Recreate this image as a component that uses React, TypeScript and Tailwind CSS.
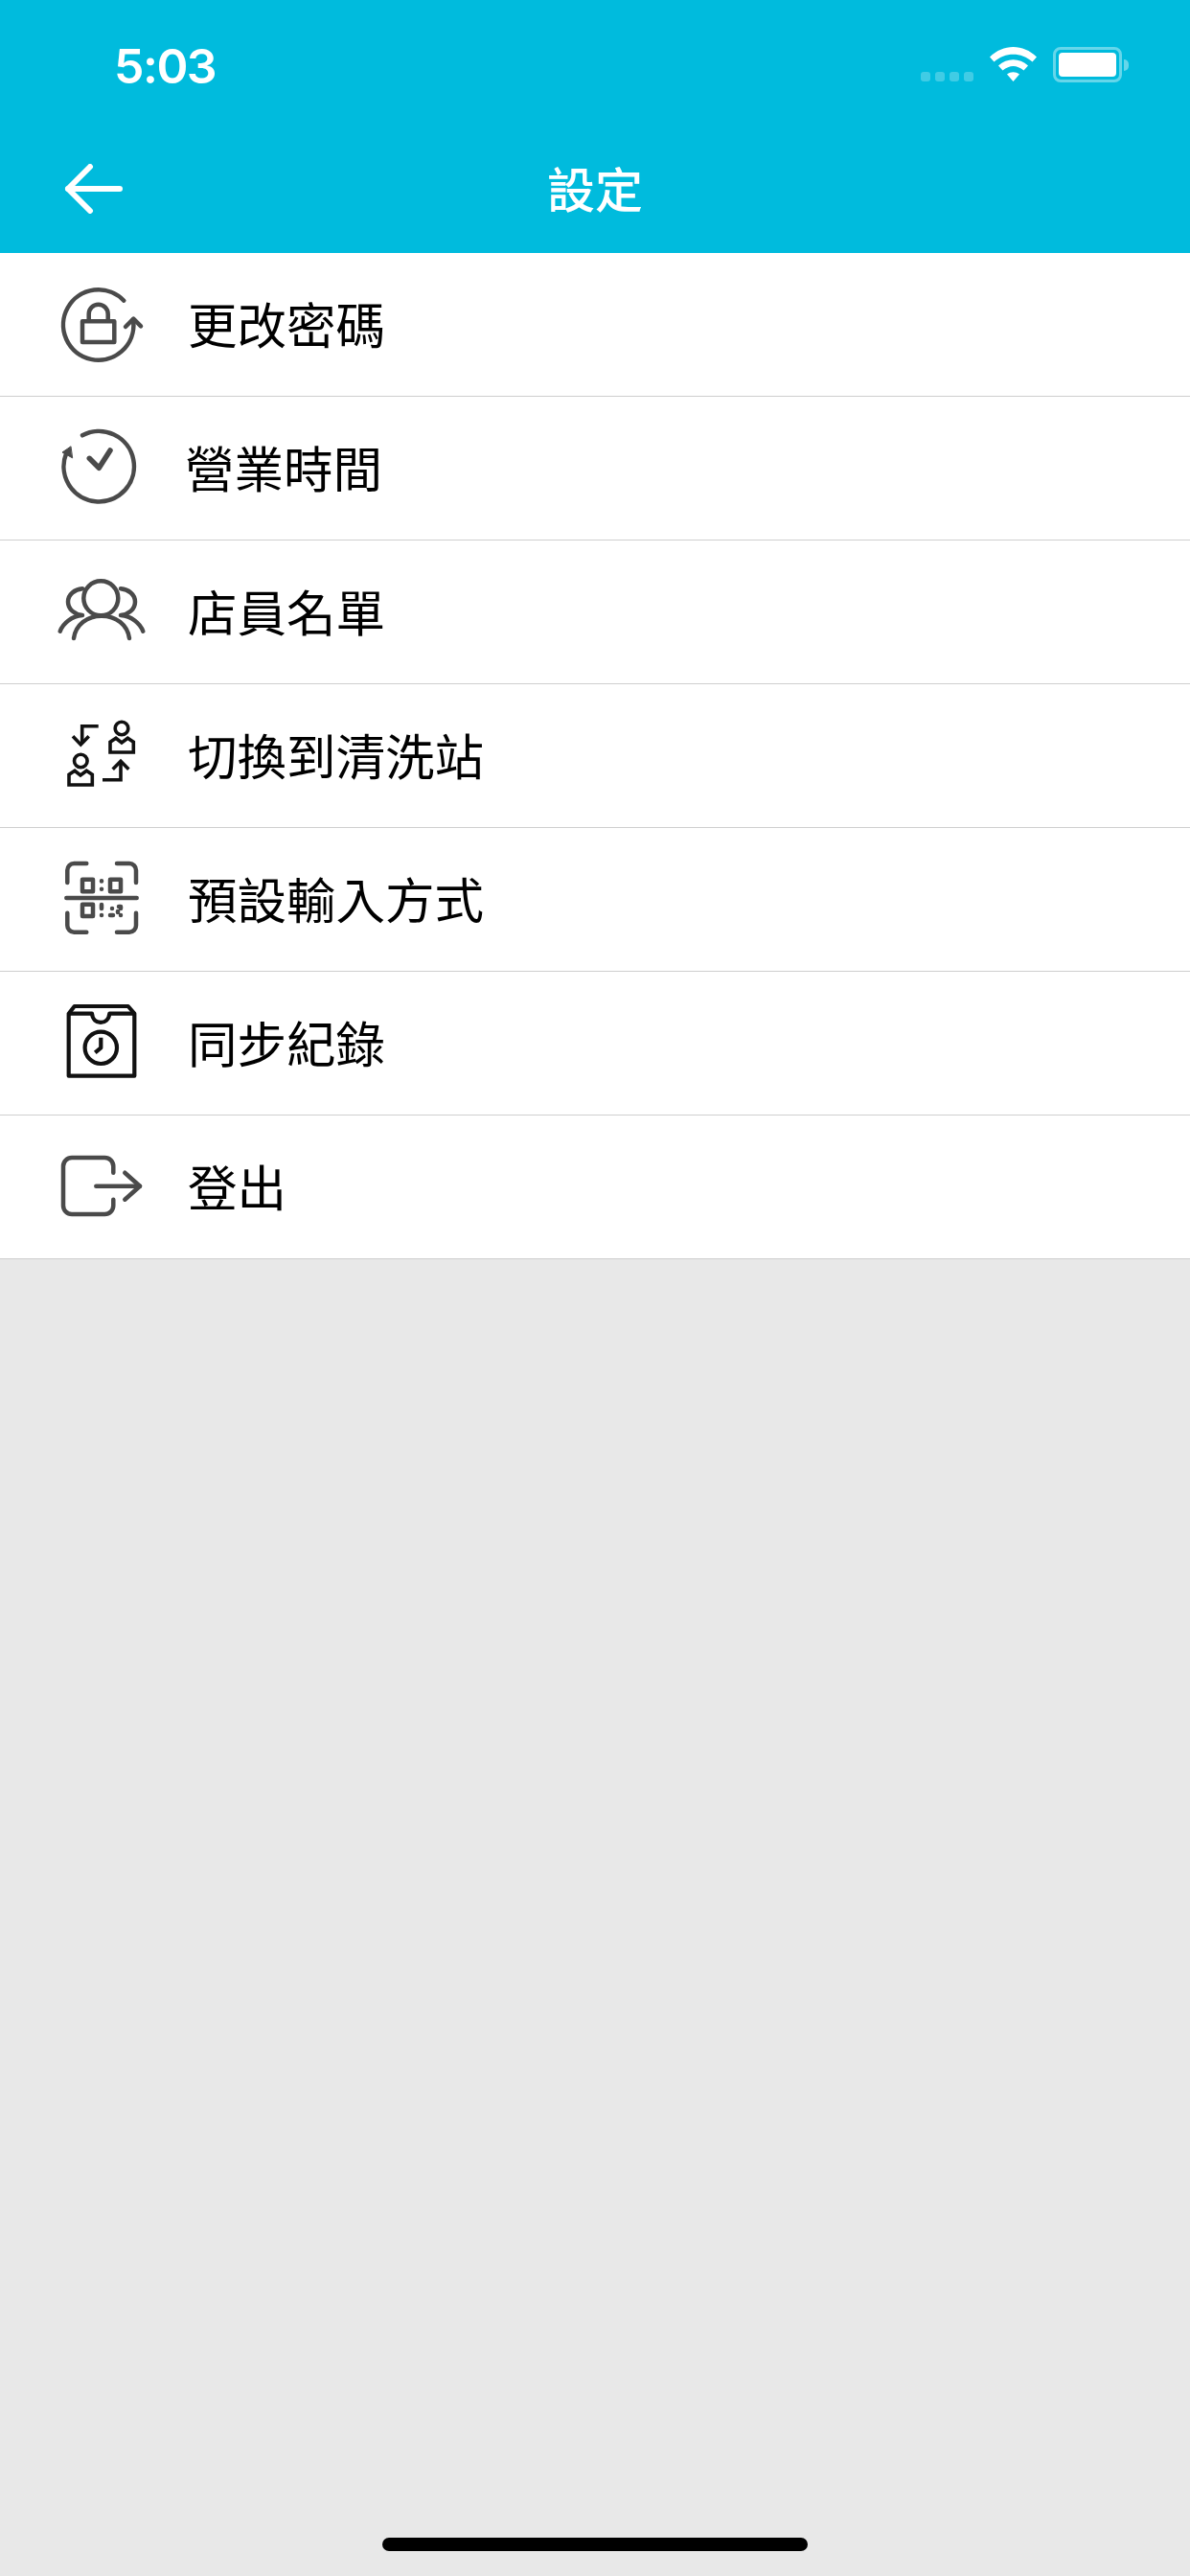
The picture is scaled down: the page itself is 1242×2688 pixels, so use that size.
import React from 'react';

const cjk = { fontFamily: '"Noto Sans CJK TC", "Noto Sans", sans-serif' };

function LockIcon() {
  return (
    <svg className="mt-[2px]" width="100" height="100" viewBox="0 0 100 100" fill="none" stroke="#4a4a4a" strokeWidth="4.5" strokeLinecap="round" strokeLinejoin="round">
      <path d="M72.3 23.7A36.7 36.7 0 1 0 82.3 46" />
      <path d="M74 51L82.3 42.7L90 50.3" />
      <rect x="29" y="45.3" width="33.3" height="21.7" />
      <path d="M35.7 44V37.7a10 10 0 0 1 20 0V44" />
    </svg>
  );
}

function HoursIcon() {
  return (
    <svg className="mt-[2px]" width="100" height="100" viewBox="0 0 100 100" fill="none" stroke="#4a4a4a" strokeWidth="4.5" strokeLinecap="round" strokeLinejoin="round">
      <path d="M29 14.3A36.7 36.7 0 1 1 12.300 32.700" />
      <path d="M16.7 26L8 32L18.3 37.7Z" fill="#4a4a4a" strokeWidth="1" />
      <path d="M36.3 38.3L46.3 48.3L58 30" strokeWidth="5.500" />
    </svg>
  );
}

function StaffIcon() {
  return (
    <svg className="mt-[2px]" width="100" height="100" viewBox="0 0 100 100" fill="none" stroke="#4a4a4a" strokeWidth="4.5" strokeLinecap="round" strokeLinejoin="round">
      <circle cx="48.3" cy="34.3" r="18" />
      <path d="M20 76C22 62 34 52.7 49 52.7S76 62 78 76" />
      <path d="M29 24.3C21 25 14 30 14 38S21 51 29 52C18 53 9 60 5.7 68.7" />
      <path d="M69 24.3C77 25 84 30 84 38S77 51 69 52C80 53 89 60 92.3 68.7" />
    </svg>
  );
}

function SwitchIcon() {
  return (
    <svg className="mt-[2px]" width="100" height="100" viewBox="0 0 100 100" fill="none" stroke="#111" strokeWidth="3.6">
      <path d="M45.7 17.7H28.7V36" />
      <path d="M19 28.3L27.3 37L35.7 28.3" />
      <circle cx="70" cy="20" r="6.8" />
      <path d="M58 45V34.3L64 30.300L70 35L76.3 30.300L82.3 34.300V45Z" />
      <circle cx="27.3" cy="54" r="6.8" />
      <path d="M15 79V68.300L21 64.300L27 69L33.300 64.300L39.300 68.300V79Z" />
      <path d="M50 73.7H69V55" />
      <path d="M60.7 62.7L69 54.3L77.3 62.7" />
    </svg>
  );
}

function ScanIcon() {
  return (
    <svg className="mt-[2px]" width="100" height="100" viewBox="0 0 100 100" fill="none" stroke="#4a4a4a" strokeWidth="4.5" strokeLinecap="round" strokeLinejoin="round">
      <path d="M13.3 31V18a7 7 0 0 1 7-7H33.3" />
      <path d="M65 11H78a7 7 0 0 1 7 7V31" />
      <path d="M12.3 47H85.7" />
      <path d="M13.3 62.7V75.7a7 7 0 0 0 7 7H33.3" />
      <path d="M65 82.7H78a7 7 0 0 0 7-7V62.7" />
      <rect x="29" y="27.7" width="11" height="12.6" />
      <rect x="58" y="27.7" width="11" height="12.6" />
      <rect x="29" y="53.7" width="11" height="12.3" />
      <path d="M49 29.3V29.4M49 37.7V37.8M49 54V58M49 65V65.1M58 65H61M60 58V58.1M67 56H69V58M66 61V62M69 65V65.1" />
    </svg>
  );
}

function SyncIcon() {
  return (
    <svg className="mt-[2px]" width="100" height="100" viewBox="0 0 100 100" fill="none" stroke="#111" strokeWidth="4.2" strokeLinejoin="round">
      <path d="M14.7 17.7V82.7H83.3V17.7L76.7 10H20.7Z" />
      <path d="M14.7 17.7H39C40 30 56 30 57.3 17.7H83.3" />
      <circle cx="48.3" cy="53.3" r="16.7" />
      <path d="M48.3 42.7V53.3L42.3 58.3" />
    </svg>
  );
}

function LogoutIcon() {
  return (
    <svg className="mt-[2px]" width="100" height="100" viewBox="0 0 100 100" fill="none" stroke="#4a4a4a" strokeWidth="4.5" strokeLinecap="round" strokeLinejoin="round">
      <path d="M61.3 33.7V27a9 9 0 0 0-9-9H18a9 9 0 0 0-9 9V68a9 9 0 0 0 9 9H52.3a9 9 0 0 0 9-9V61.7" />
      <path d="M43.3 47.7H89" />
      <path d="M73.3 33.7L89 47.7L73.3 61.7" />
    </svg>
  );
}

const rows = [
  { label: '更改密碼', Icon: LockIcon, textClass: 'ml-[39px]' },
  { label: '營業時間', Icon: HoursIcon, textClass: 'ml-[36px]' },
  { label: '店員名單', Icon: StaffIcon, textClass: 'ml-[39px]' },
  { label: '切換到清洗站', Icon: SwitchIcon, textClass: 'ml-[39px]' },
  { label: '預設輸入方式', Icon: ScanIcon, textClass: 'ml-[39px]' },
  { label: '同步紀錄', Icon: SyncIcon, textClass: 'ml-[39px]' },
  { label: '登出', Icon: LogoutIcon, textClass: 'ml-[39px]' },
];

function App() {
  return (
    <div className="flex h-[2688px] w-[1242px] flex-col bg-[#e8e8e8]">
      <div className="bg-[#00bbdd]">
        {/* status bar */}
        <div className="flex h-[132px] items-start justify-between pl-[119px] pr-[64px] pt-[37px]">
          <span className="text-[50px] font-semibold leading-[64px] tracking-[-1.5px] text-white" style={{ fontFamily: 'Inter, sans-serif' }}>5:03</span>
          <div className="flex items-start pt-[12px]">
            <div className="mr-[17px] mt-[26px] flex gap-[5px]">
              <div className="h-[10px] w-[10px] rounded-[3px] bg-white/25" />
              <div className="h-[10px] w-[10px] rounded-[3px] bg-white/25" />
              <div className="h-[10px] w-[10px] rounded-[3px] bg-white/25" />
              <div className="h-[10px] w-[10px] rounded-[3px] bg-white/25" />
            </div>
            <svg width="49" height="36" viewBox="0 0 49 36" fill="white">
              <path d="M0 10.5C14 -3.5 35 -3.5 49 10.5L44.500 15.500C33 5 16 5 4.500 15.500Z" />
              <path d="M9 19.500C18 11 31 11 40 19.500L35.500 24.500C28 18.500 21 18.500 13.500 24.500Z" />
              <path d="M18 28.500C22 25.500 27 25.500 31 28.500L24.500 36Z" />
            </svg>
            <div className="ml-[17px] flex items-center">
              <div className="h-[37px] w-[72px] rounded-[8px] border-[3px] border-white/40 p-[3px]">
                <div className="h-full w-full rounded-[4px] bg-white" />
              </div>
              <div className="ml-[2px] h-[12px] w-[5px] rounded-r-full bg-white/40" />
            </div>
          </div>
        </div>
        {/* nav bar */}
        <div className="relative flex h-[132px] items-center justify-center pb-[6px]">
          <svg className="absolute left-[66px] top-[39px]" width="64" height="52" viewBox="0 0 64 52" fill="none" stroke="white" strokeWidth="6" strokeLinecap="round" strokeLinejoin="round">
            <path d="M28 3L5 26L28 49" />
            <path d="M5 26H59" />
          </svg>
          <span className="text-[50px] font-medium leading-[64px] text-white" style={cjk}>設定</span>
        </div>
      </div>

      <div className="bg-white">
        {rows.map(({ label, Icon, textClass }) => (
          <div key={label} className="flex h-[150px] items-center border-b border-[#cfcfcf] pl-[57px]">
            <Icon />
            <span className={`${textClass} mb-[4px] text-[51.5px] leading-[64px] text-black`} style={cjk}>{label}</span>
          </div>
        ))}
      </div>

      <div className="flex flex-1 items-end justify-center pb-[26px]">
        <div className="h-[14px] w-[444px] rounded-full bg-black" />
      </div>
    </div>
  );
}

export default App;
